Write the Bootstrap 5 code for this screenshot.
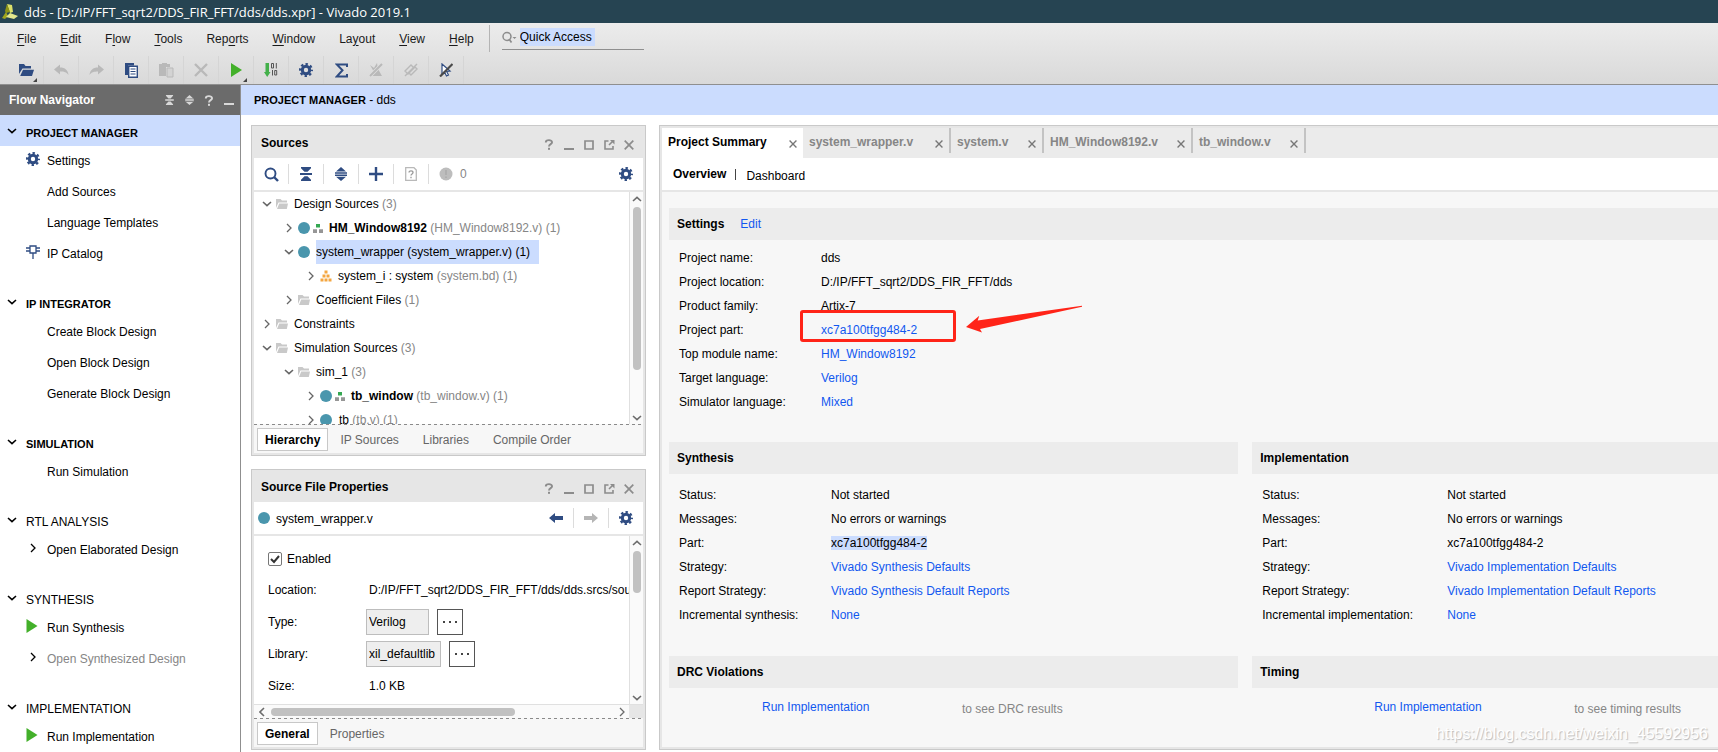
<!DOCTYPE html>
<html lang="en">
<head>
<meta charset="utf-8">
<meta name="viewport" content="width=device-width, initial-scale=1">
<title>dds - Vivado 2019.1</title>
<link href="https://cdn.jsdelivr.net/npm/bootstrap@5.3.0/dist/css/bootstrap.min.css" rel="stylesheet">
<style>
:root { --navy:#2f4c82; --sel:#cbdcfe; --line:#c9c9c9; --frame:#e6e6e6; --blue:#1158f0; --dim:#868686; }
body { font-family:"Liberation Sans",Arial,sans-serif; font-size:12px; line-height:16px; color:#000; background:#fff; }
a { color:inherit; text-decoration:none; }
a.lnk { color:var(--blue); }
svg { display:block; flex:none; }
.ib { border:0; background:none; padding:0; color:inherit; display:flex; align-items:center; justify-content:center; flex:none; }
.dim { color:var(--dim); }
.titlebar { background:#264452; color:#fff; height:23px; font:13px/22px "Open Sans","Noto Sans",sans-serif; padding-left:2px; gap:6px; }
.topbars { background:linear-gradient(#ececec,#d9d9d9); border-bottom:1px solid #8f8f8f; height:62px; }
.menus { height:31px; padding-left:17px; }
.menus nav { gap:24px; }
.menus a { text-underline-offset:2px; color:#1a1a1a; }
.menusep { width:1px; height:27px; background:#b4b4b4; margin:0 12px 0 15px; }
.quick { width:142px; height:24px; border-bottom:1px solid #8f8f8f; gap:3px; margin-top:-2px; align-items:center; }
.quick input { width:75px; height:18px; border:0; padding:0; background:var(--sel); color:#000; outline:0; }
.tools { height:31px; padding:2px 0 0 9px; }
.tools .ib { width:35px; height:28px; border-right:1px solid #d5d5d5; position:relative; color:var(--navy); }
.tools .ib:disabled { color:#b9b9b9; }
.tools .more::after { content:""; position:absolute; right:6px; bottom:2px; border:solid transparent; border-width:2px; border-right-color:#444; border-bottom-color:#444; }
.flow { width:241px; border-right:1px solid #8f8f8f; }
.flow-head { background:#6b6b6b; color:#fff; height:30px; padding:0 1px 0 9px; font-weight:700; }
.flow-head .ib { width:20px; color:#d8d8d8; }
.grp { margin-bottom:18px; }
.grp h2 { font-size:12px; line-height:16px; height:31px; margin:0; padding:4px 0 0 7px; display:flex; gap:9px; align-items:center; }
.grp h2.strong { font-size:11px; font-weight:700; }
.grp h2.plain { font-weight:400; }
.grp h2 svg { margin-top:-3px; }
.grp ul { display:flex; flex-direction:column; gap:2px; }
.grp li { height:29px; display:flex; align-items:center; padding-left:26px; }
.grp li .slot { width:21px; display:block; flex:none; margin-top:-4px; }
.pm { background:var(--sel); height:30px; padding-left:13px; line-height:30px; }
.pm b { font-size:11px; }
.desk { padding:10px 0 2px 10px; gap:13px; }
.side { width:395px; gap:13px; }
.frame { border:1px solid var(--line); padding:2px; background:var(--frame); min-height:0; display:flex; flex-direction:column; }
.f-src { flex:332 1 0; } .f-prop { flex:280 1 0; }
.phead { height:30px; padding:0 4px 1px 7px; font-weight:700; flex:none; }
.phead .ib { width:20px; color:#8c8c8c; margin-top:4px; }
.ptool { background:#fff; height:32px; margin-bottom:2px; flex:none; color:var(--navy); }
.ptool .ib { width:34px; height:20px; }
.ptool .ib + .ib { border-left:1px solid #dcdcdc; width:35px; }
.ptool .name { color:#000; padding-top:1px; margin-left:6px; }
.ptool .count { margin-left:-3px; }
.pbody { background:#fff; flex:1 1 0; min-height:0; display:flex; overflow:hidden; }
.vbar { width:14px; border-left:1px solid #e0e0e0; background:#fafafa; display:flex; flex-direction:column; align-items:center; padding:2px 0 3px; gap:2px; flex:none; color:#6c6c6c; }
.vbar i { width:8px; border-radius:4px; background:#c1c1c1; display:block; }
.vbar .rest { flex:1; width:8px; padding-top:1px; }
.vbar .rest i { height:100%; }
.trow { height:24px; display:flex; align-items:center; white-space:nowrap; padding-left:8px; }
.trow .ib { width:10px; margin-right:4px; color:#666; }
.trow .ic { margin-right:6px; }
.trow .dotc { margin-right:3px; }
.l1 { padding-left:30px; } .l2 { padding-left:52px; }
.dotc { width:12px; height:12px; border-radius:50%; background:#4a96ad; flex:none; display:block; }
.picked { background:var(--sel); line-height:24px; padding-right:9px; margin-left:3px; }
.dash { height:1px; background:repeating-linear-gradient(90deg,#8a8a8a 0 3px,transparent 3px 6px) #f7f7f7; flex:none; }
.ptabs { background:#f7f7f7; height:28px; padding:3px; flex:none; }
.ptabs button { border:1px solid transparent; background:none; padding:0 11px; height:23px; line-height:20px; color:#666; }
.ptabs button.on { border-color:#c8c8c8; background:#fff; color:#000; font-weight:700; padding:0 7px; }
.form { padding:9px 0 0 14px; overflow:hidden; white-space:nowrap; }
.form .fr { height:32px; display:flex; align-items:center; }
.form .fr.first { height:29px; padding-bottom:2px; }
.form .fl { width:98px; flex:none; }
.form .fv { padding-left:3px; }
.form input[type=text] { height:26px; border:1px solid #bdbdbd; background:#eee; padding:0 2px; color:#000; }
.dots { width:26px; height:26px; border:1px solid #555; background:#fff; margin-left:8px; }
.form input[type=checkbox] { appearance:none; width:14px; height:14px; margin:0 5px 0 0; border:1px solid #777; border-radius:2px; background:#fff url("data:image/svg+xml,%3Csvg xmlns='http://www.w3.org/2000/svg' viewBox='0 0 12 12'%3E%3Cpath d='M2 6l3 3 5-6' fill='none' stroke='%23333' stroke-width='2'/%3E%3C/svg%3E") center/12px; }
.hbar { height:14px; background:#fafafa; border-top:1px solid #e0e0e0; color:#6c6c6c; flex:none; padding-left:5px; }
.hbar .trk { flex:1; margin:0 4px 0 6px; } .hbar .trk i { display:block; height:8px; width:71%; border-radius:4px; background:#c1c1c1; }
.hbar .corner { width:14px; height:13px; background:var(--frame); margin-left:4px; }
.doc { padding-right:0; border-right:0; flex:1 1 0; min-width:0; }
.dtabs { background:#ebebeb; height:30px; flex:none; }
.dtabs .tb { display:flex; height:25px; padding:3px 6px 0 6px; border-right:2px solid #c3c3c3; color:var(--dim); font-weight:700; align-items:center; }
.dtabs .tb.on { background:#fff; color:#000; height:30px; border:0; width:141px; padding-bottom:5px; }
.dtabs .ib { margin:4px 0 0 auto; color:#777; }
.t2 { width:148px; } .t3 { width:93px; } .t4 { width:149px; } .t5 { width:113px; }
.sub { background:#fff; height:32px; margin-bottom:2px; padding-left:11px; flex:none; }
.sub a { margin-right:9px; }
.sub .bar { width:1px; height:11px; background:#444; margin-right:10px; }
.sheet { background:#f7f7f7; flex:1 1 0; min-height:0; overflow:hidden; padding:16px 0 0 7px; }
.sh { background:#ececec; height:32px; line-height:32px; font-size:12px; font-weight:700; padding-left:8px; margin:0; }
.kv { display:grid; grid-template-columns:var(--k) 1fr; margin:0; padding:6px 0 0 10px; line-height:24px; white-space:nowrap; }
.kv dt, .kv dd { font-weight:400; margin:0; }
.set { --k:142px; height:202px; }
.two { display:grid; grid-template-columns:minmax(0,55fr) minmax(0,45fr); column-gap:14px; }
.two .kv { height:182px; padding-top:9px; }
.syn { --k:152px; } .imp { --k:185px; }
.run { padding:11px 0 0 93px; white-space:nowrap; }
.run.wide { padding-left:122px; }
.run a { width:200px; flex:none; }
.run span { padding-top:2px; }
.note { position:relative; }
.mark-box { position:absolute; left:-21px; top:-8px; width:156px; height:32px; border:3px solid #ff2418; border-radius:3px; pointer-events:none; }
.mark-arrow { position:absolute; left:144px; top:-13px; }
.wm { position:absolute; right:10px; bottom:5px; font-size:16px; line-height:20px; color:#fff; text-shadow:1px 1px 1px #bbb; }
</style>
</head>
<body>
<svg width="0" height="0" class="position-absolute" aria-hidden="true">
<symbol id="gear" viewBox="0 0 14 14"><circle cx="7" cy="7" r="3.7" fill="none" stroke="currentColor" stroke-width="3"/><circle cx="7" cy="7" r="5.9" fill="none" stroke="currentColor" stroke-width="2.2" stroke-dasharray="2.4 2.234" stroke-dashoffset="1.2"/></symbol>
<symbol id="down" viewBox="0 0 10 6"><path d="M1 1l4 3.6L9 1" fill="none" stroke="currentColor" stroke-width="1.6"/></symbol>
<symbol id="up" viewBox="0 0 10 6"><path d="M1 5l4-3.6L9 5" fill="none" stroke="currentColor" stroke-width="1.6"/></symbol>
<symbol id="right" viewBox="0 0 6 10"><path d="M1 1l4 4-4 4" fill="none" stroke="currentColor" stroke-width="1.3"/></symbol>
<symbol id="left" viewBox="0 0 6 10"><path d="M5 1L1 5l4 4" fill="none" stroke="currentColor" stroke-width="1.6"/></symbol>
<symbol id="collapse" viewBox="0 0 12 14"><path d="M1 0h10v1.2L7.5 4.8h-3L1 1.2zM0 6h12v2H0zM4.500 9.200h3L11 12.800V14H1v-1.200z" fill="currentColor"/></symbol>
<symbol id="expand" viewBox="0 0 12 14"><path d="M6 0l5 4.500H1zM0 5.300h12v1.400H0zM0 7.500h12v1.400H0zM1 9.700h10L6 14z" fill="currentColor"/></symbol>
<symbol id="help" viewBox="0 0 10 12"><path d="M1.500 3.800C1.500.4 8.500.4 8.300 3.700 8.200 5.800 5 5.500 5 8.300" fill="none" stroke="currentColor" stroke-width="2.100"/><path d="M3.900 9.600h2.200v2.200H3.900z" fill="currentColor"/></symbol>
<symbol id="mini" viewBox="0 0 10 12"><path d="M0 9h10v2H0z" fill="currentColor"/></symbol>
<symbol id="maxi" viewBox="0 0 10 12"><path d="M1 2h8v8H1z" fill="none" stroke="currentColor" stroke-width="1.700"/></symbol>
<symbol id="pop" viewBox="0 0 11 12"><path d="M4.500 2H1v8h8V7M5 6l4-4" fill="none" stroke="currentColor" stroke-width="1.600"/><path d="M6 1h4.500v4.500z" fill="currentColor"/></symbol>
<symbol id="close" viewBox="0 0 10 10"><path d="M.7.700l8.600 8.600M9.300.7L.7 9.300" fill="none" stroke="currentColor" stroke-width="1.700"/></symbol>
<symbol id="folder" viewBox="0 0 12 12"><path d="M0 1h4.500L6 2.500h5V4.500H2.500L0 10z" fill="#c9c9c9"/><path d="M3.200 5.500H12L10.800 11H1z" fill="#c9c9c9"/></symbol>
<symbol id="hier" viewBox="0 0 10 9"><path d="M3 0h4v3.500H3z" fill="#35a852"/><path d="M0 5.300h4V9H0zM6 5.300h4V9H6z" fill="#969696"/></symbol>
<symbol id="bd" viewBox="0 0 12 12"><path d="M4.500.5h3v3h-3zM2.500 4.500h3v3h-3zM6.500 4.500h3v3h-3zM.5 8.500h3v3h-3zM4.500 8.500h3v3h-3zM8.500 8.500h3v3h-3z" fill="#f4a640"/></symbol>
<symbol id="play" viewBox="0 0 11 14"><path d="M0 0l11 7-11 7z" fill="#43b02a"/></symbol>
<symbol id="arr" viewBox="0 0 14 12"><path d="M14 6L8 1v3H0v4h8v3z" fill="currentColor"/></symbol>
</svg>

<div class="vh-100 d-flex flex-column overflow-hidden">
<header>
  <div class="titlebar d-flex align-items-center">
    <svg width="16" height="17" viewBox="0 0 16 17"><path d="M5 1l5 1 1 7-3 1z" fill="#dbe06a"/><path d="M5 1L3 8l1 2 4-1z" fill="#8e9416"/><path d="M0 15l4-6 2 4-3 3z" fill="#a0a51c"/><path d="M4 14l4-4 8 3-4 3z" fill="#e3e78d"/></svg>
    <span>dds - [D:/IP/FFT_sqrt2/DDS_FIR_FFT/dds/dds.xpr] - Vivado 2019.1</span>
  </div>
  <div class="topbars">
    <div class="menus d-flex align-items-center">
      <nav class="d-flex">
        <a href="#"><u>F</u>ile</a><a href="#"><u>E</u>dit</a><a href="#">F<u>l</u>ow</a><a href="#"><u>T</u>ools</a><a href="#">Rep<u>o</u>rts</a><a href="#"><u>W</u>indow</a><a href="#">La<u>y</u>out</a><a href="#"><u>V</u>iew</a><a href="#"><u>H</u>elp</a>
      </nav>
      <span class="menusep"></span>
      <label class="quick d-flex"><svg width="15" height="13" viewBox="0 0 15 13"><circle cx="5" cy="5.500" r="4" fill="none" stroke="#8d8d8d" stroke-width="1.500"/><path d="M7 8l2.500 3.500" stroke="#8d8d8d" stroke-width="1.700"/><path d="M10.500 6h4L12.500 8z" fill="#8d8d8d"/></svg><input type="text" value="Quick Access" aria-label="Quick Access"></label>
    </div>
    <div class="tools d-flex">
      <button class="ib more" aria-label="Open"><svg width="16" height="14" viewBox="0 0 16 14"><path d="M1 1h5l1.500 2H13v2.500H4.500L1 11z" fill="currentColor"/><path d="M5 6.700h11L14 13H2.200z" fill="currentColor"/></svg></button>
      <button class="ib" disabled aria-label="Undo"><svg width="15" height="12" viewBox="0 0 15 12"><path d="M0 5.500L6 .5v3c5 0 8 2.500 8.500 7.500C12.500 8 10 7.500 6 7.500v3z" fill="currentColor"/></svg></button>
      <button class="ib" disabled aria-label="Redo"><svg width="15" height="12" viewBox="0 0 15 12"><path d="M15 5.500L9 .5v3C4 3.500 1 6 .5 11 2.500 8 5 7.500 9 7.500v3z" fill="currentColor"/></svg></button>
      <button class="ib" aria-label="Copy"><svg width="13" height="15" viewBox="0 0 13 15"><path d="M0 0h9v2.500H3V12H0z" fill="currentColor"/><path d="M3.700 3.200h8.600v11H3.700z" fill="#fff" stroke="currentColor" stroke-width="1.400"/><path d="M5.500 6h5M5.500 8.500h5M5.500 11h5" stroke="currentColor" stroke-width="1.200"/></svg></button>
      <button class="ib" disabled aria-label="Paste"><svg width="15" height="15" viewBox="0 0 15 15"><path d="M0 1h3V0h5v1h3v3H7v9H0z" fill="currentColor"/><path d="M8 5h6v9H8z" fill="#d3d3d3" stroke="currentColor"/></svg></button>
      <button class="ib" disabled aria-label="Delete"><svg width="14" height="14" viewBox="0 0 14 14"><path d="M1 1l12 12M13 1L1 13" stroke="currentColor" stroke-width="2.400"/></svg></button>
      <button class="ib more" aria-label="Run"><svg width="11" height="14"><use href="#play"/></svg></button>
      <button class="ib" aria-label="Generate Bitstream"><svg width="14" height="14" viewBox="0 0 14 14"><path d="M1.500 0H5v9h1.500L3.200 14 0 9h1.500z" fill="#43b04a"/><path d="M7.500.5h2v4.500h-2zM12.300 0v5.500M8.500 7v5.500M10.700 7.500h2v4.500h-2z" fill="none" stroke="#555" stroke-width="1"/></svg></button>
      <button class="ib" aria-label="Settings"><svg width="14" height="14"><use href="#gear"/></svg></button>
      <button class="ib" aria-label="Report"><svg width="13" height="15" viewBox="0 0 13 15"><path d="M12 4V1.500H1.800L7.500 7.300 1.800 13.500H12V11" fill="none" stroke="currentColor" stroke-width="2"/></svg></button>
      <button class="ib" disabled aria-label="Unmark"><svg width="14" height="14" viewBox="0 0 14 14"><path d="M1 2l4 3 3-5 1 6 4 7H1l4-4z" fill="currentColor"/><path d="M1 13L13 1" stroke="#dedede" stroke-width="3.500"/><path d="M1 13L13 1" stroke="currentColor" stroke-width="2"/></svg></button>
      <button class="ib" disabled aria-label="Unlink"><svg width="14" height="14" viewBox="0 0 14 14"><path d="M1 8l6-6 3 3-6 6zM5 10l6-6 2 2-6 6z" fill="none" stroke="currentColor" stroke-width="1.400"/><path d="M1 13L13 1" stroke="currentColor" stroke-width="1.500"/></svg></button>
      <button class="ib" aria-label="Unselect"><svg width="14" height="14" viewBox="0 0 14 14"><path d="M3 1l8 7-3.500.3L9.500 12l-2 1-2-4L3 11.500z" fill="#fff" stroke="currentColor" stroke-width="1.200"/><path d="M1 13.500L13.500 1" stroke="#4a4a4a" stroke-width="2.200"/></svg></button>
    </div>
  </div>
</header>

<div class="d-flex flex-grow-1" style="min-height:0">
<aside class="flow flex-shrink-0 overflow-hidden">
  <div class="flow-head d-flex align-items-center"><span class="me-auto">Flow Navigator</span>
    <button class="ib" aria-label="Collapse all"><svg width="9" height="10"><use href="#collapse"/></svg></button><button class="ib" aria-label="Expand all"><svg width="9" height="10"><use href="#expand"/></svg></button><button class="ib" aria-label="Help"><svg width="10" height="11"><use href="#help"/></svg></button><button class="ib" aria-label="Minimize"><svg width="10" height="12"><use href="#mini"/></svg></button>
  </div>
  <section class="grp"><h2 class="strong" style="background:var(--sel)"><svg width="10" height="6"><use href="#down"/></svg>PROJECT MANAGER</h2>
    <ul class="list-unstyled m-0"><li><span class="slot"><svg width="14" height="14" color="#2f4c82"><use href="#gear"/></svg></span><a href="#">Settings</a></li><li><span class="slot"></span><a href="#">Add Sources</a></li><li><span class="slot"></span><a href="#">Language Templates</a></li>
    <li><span class="slot"><svg width="14" height="14" viewBox="0 0 14 14"><path d="M4 1h6v7H4zM0 3h4M0 6h4M10 3h4M10 6h4M7 8v6" fill="none" stroke="#2f4c82" stroke-width="1.300"/></svg></span><a href="#">IP Catalog</a></li></ul></section>
  <section class="grp"><h2 class="strong"><svg width="10" height="6"><use href="#down"/></svg>IP INTEGRATOR</h2>
    <ul class="list-unstyled m-0"><li><span class="slot"></span><a href="#">Create Block Design</a></li><li><span class="slot"></span><a href="#">Open Block Design</a></li><li><span class="slot"></span><a href="#">Generate Block Design</a></li></ul></section>
  <section class="grp"><h2 class="strong"><svg width="10" height="6"><use href="#down"/></svg>SIMULATION</h2>
    <ul class="list-unstyled m-0"><li><span class="slot"></span><a href="#">Run Simulation</a></li></ul></section>
  <section class="grp"><h2 class="plain"><svg width="10" height="6"><use href="#down"/></svg>RTL ANALYSIS</h2>
    <ul class="list-unstyled m-0"><li><span class="slot ps-1"><svg width="6" height="10"><use href="#right"/></svg></span><a href="#">Open Elaborated Design</a></li></ul></section>
  <section class="grp"><h2 class="plain"><svg width="10" height="6"><use href="#down"/></svg>SYNTHESIS</h2>
    <ul class="list-unstyled m-0"><li><span class="slot"><svg width="12" height="14"><use href="#play"/></svg></span><a href="#">Run Synthesis</a></li><li><span class="slot ps-1"><svg width="6" height="10"><use href="#right"/></svg></span><a href="#" class="dim">Open Synthesized Design</a></li></ul></section>
  <section class="grp mb-0"><h2 class="plain"><svg width="10" height="6"><use href="#down"/></svg>IMPLEMENTATION</h2>
    <ul class="list-unstyled m-0"><li><span class="slot"><svg width="12" height="14"><use href="#play"/></svg></span><a href="#">Run Implementation</a></li></ul></section>
</aside>

<main class="d-flex flex-column flex-grow-1" style="min-width:0">
  <div class="pm flex-shrink-0"><b>PROJECT MANAGER</b> - dds</div>
  <div class="desk d-flex flex-grow-1" style="min-height:0">
    <div class="side d-flex flex-column flex-shrink-0">
      <section class="frame f-src">
        <div class="phead d-flex align-items-center"><span class="me-auto">Sources</span><button class="ib" aria-label="Help"><svg width="10" height="11"><use href="#help"/></svg></button><button class="ib" aria-label="Minimize"><svg width="10" height="12"><use href="#mini"/></svg></button><button class="ib" aria-label="Maximize"><svg width="10" height="12"><use href="#maxi"/></svg></button><button class="ib" aria-label="Float"><svg width="11" height="12"><use href="#pop"/></svg></button><button class="ib" aria-label="Close"><svg width="10" height="10"><use href="#close"/></svg></button></div>
        <div class="ptool d-flex align-items-center">
          <button class="ib" aria-label="Search"><svg width="15" height="15" viewBox="0 0 15 15"><circle cx="6.500" cy="6.500" r="5" fill="none" stroke="currentColor" stroke-width="1.900"/><path d="M10 10l4 4" stroke="currentColor" stroke-width="2.400"/></svg></button><button class="ib" aria-label="Collapse all"><svg width="12" height="14"><use href="#collapse"/></svg></button><button class="ib" aria-label="Expand all"><svg width="12" height="14"><use href="#expand"/></svg></button><button class="ib" aria-label="Add"><svg width="14" height="14" viewBox="0 0 14 14"><path d="M7 0v14M0 7h14" stroke="currentColor" stroke-width="2.400"/></svg></button><button class="ib" disabled aria-label="File help"><svg width="12" height="14" viewBox="0 0 12 14"><path d="M.7.700H9l2.300 2.300v10.300H.7z" fill="none" stroke="#b9b9b9" stroke-width="1.300"/><path d="M4 5.500c0-2.200 4-2.200 4 0C8 7 6 7 6 8.600M6 9.700v1.500" fill="none" stroke="#999" stroke-width="1.300"/></svg></button><button class="ib" aria-label="Messages"><svg width="14" height="14" viewBox="0 0 14 14"><circle cx="7" cy="7" r="6.500" fill="#bdbdbd"/><path d="M7 3v5M7 9.500V11" stroke="#aaa" stroke-width="1.500"/></svg></button><span class="dim count">0</span>
          <button class="ib ms-auto border-0" aria-label="Settings"><svg width="14" height="14"><use href="#gear"/></svg></button>
        </div>
        <div class="pbody">
          <div class="flex-grow-1 overflow-hidden">
            <div class="trow"><button class="ib" aria-label="Toggle"><svg width="10" height="6"><use href="#down"/></svg></button><svg class="ic" width="12" height="12"><use href="#folder"/></svg><span>Design Sources <span class="dim">(3)</span></span></div>
            <div class="trow l1"><button class="ib" aria-label="Toggle"><svg width="6" height="10"><use href="#right"/></svg></button><i class="dotc"></i><svg class="ic" width="10" height="9"><use href="#hier"/></svg><span><b>HM_Window8192</b> <span class="dim">(HM_Window8192.v) (1)</span></span></div>
            <div class="trow l1"><button class="ib" aria-label="Toggle"><svg width="10" height="6"><use href="#down"/></svg></button><i class="dotc"></i><span class="picked">system_wrapper (system_wrapper.v) (1)</span></div>
            <div class="trow l2"><button class="ib" aria-label="Toggle"><svg width="6" height="10"><use href="#right"/></svg></button><svg class="ic" width="12" height="12"><use href="#bd"/></svg><span>system_i : system <span class="dim">(system.bd) (1)</span></span></div>
            <div class="trow l1"><button class="ib" aria-label="Toggle"><svg width="6" height="10"><use href="#right"/></svg></button><svg class="ic" width="12" height="12"><use href="#folder"/></svg><span>Coefficient Files <span class="dim">(1)</span></span></div>
            <div class="trow"><button class="ib" aria-label="Toggle"><svg width="6" height="10"><use href="#right"/></svg></button><svg class="ic" width="12" height="12"><use href="#folder"/></svg><span>Constraints</span></div>
            <div class="trow"><button class="ib" aria-label="Toggle"><svg width="10" height="6"><use href="#down"/></svg></button><svg class="ic" width="12" height="12"><use href="#folder"/></svg><span>Simulation Sources <span class="dim">(3)</span></span></div>
            <div class="trow l1"><button class="ib" aria-label="Toggle"><svg width="10" height="6"><use href="#down"/></svg></button><svg class="ic" width="12" height="12"><use href="#folder"/></svg><span>sim_1 <span class="dim">(3)</span></span></div>
            <div class="trow l2"><button class="ib" aria-label="Toggle"><svg width="6" height="10"><use href="#right"/></svg></button><i class="dotc"></i><svg class="ic" width="10" height="9"><use href="#hier"/></svg><span><b>tb_window</b> <span class="dim">(tb_window.v) (1)</span></span></div>
            <div class="trow l2"><button class="ib" aria-label="Toggle"><svg width="6" height="10"><use href="#right"/></svg></button><i class="dotc"></i><span class="ms-1">tb <span class="dim">(tb.v) (1)</span></span></div>
          </div>
          <div class="vbar"><svg width="10" height="10" viewBox="0 -2 10 10"><use href="#up" width="10" height="6"/></svg><div class="rest"><i style="height:79%"></i></div><svg width="10" height="6"><use href="#down"/></svg></div>
        </div>
        <div class="dash"></div>
        <div class="ptabs d-flex"><button class="on">Hierarchy</button><button>IP Sources</button><button>Libraries</button><button>Compile Order</button></div>
      </section>

      <section class="frame f-prop">
        <div class="phead d-flex align-items-center"><span class="me-auto">Source File Properties</span><button class="ib" aria-label="Help"><svg width="10" height="11"><use href="#help"/></svg></button><button class="ib" aria-label="Minimize"><svg width="10" height="12"><use href="#mini"/></svg></button><button class="ib" aria-label="Maximize"><svg width="10" height="12"><use href="#maxi"/></svg></button><button class="ib" aria-label="Float"><svg width="11" height="12"><use href="#pop"/></svg></button><button class="ib" aria-label="Close"><svg width="10" height="10"><use href="#close"/></svg></button></div>
        <div class="ptool d-flex align-items-center"><i class="dotc ms-1"></i><span class="me-auto name">system_wrapper.v</span><button class="ib" aria-label="Back"><svg width="14" height="12" viewBox="0 0 14 12"><path d="M0 6l6-5v3h8v4H6v3z" fill="currentColor"/></svg></button><button class="ib" disabled aria-label="Forward"><svg width="14" height="12" color="#b5b5b5"><use href="#arr"/></svg></button><button class="ib" aria-label="Settings"><svg width="14" height="14"><use href="#gear"/></svg></button></div>
        <div class="pbody">
          <div class="form flex-grow-1">
            <div class="fr first"><input type="checkbox" id="en" checked><label for="en">Enabled</label></div>
            <div class="fr"><span class="fl">Location:</span><span class="fv">D:/IP/FFT_sqrt2/DDS_FIR_FFT/dds/dds.srcs/sources_1/bd</span></div>
            <div class="fr"><label class="fl" for="ty">Type:</label><input type="text" id="ty" value="Verilog" readonly style="width:63px"><button class="dots ib" aria-label="Choose type"><svg width="14" height="2" viewBox="0 0 14 2"><path d="M0 0h2v2H0zM6 0h2v2H6zM12 0h2v2h-2z" fill="#444"/></svg></button></div>
            <div class="fr"><label class="fl" for="lb">Library:</label><input type="text" id="lb" value="xil_defaultlib" readonly style="width:75px"><button class="dots ib" aria-label="Choose library"><svg width="14" height="2" viewBox="0 0 14 2"><path d="M0 0h2v2H0zM6 0h2v2H6zM12 0h2v2h-2z" fill="#444"/></svg></button></div>
            <div class="fr"><span class="fl">Size:</span><span class="fv">1.0 KB</span></div>
          </div>
          <div class="vbar"><svg width="10" height="10" viewBox="0 -2 10 10"><use href="#up" width="10" height="6"/></svg><div class="rest"><i style="height:29%"></i></div><svg width="10" height="6"><use href="#down"/></svg></div>
        </div>
        <div class="hbar d-flex align-items-center"><svg width="6" height="10"><use href="#left"/></svg><div class="trk"><i></i></div><svg width="6" height="10"><use href="#right"/></svg><span class="corner"></span></div>
        <div class="dash"></div>
        <div class="ptabs d-flex"><button class="on">General</button><button>Properties</button></div>
      </section>
    </div>

    <section class="frame doc position-relative">
      <div class="dtabs d-flex">
        <div class="tb on">Project Summary<button class="ib" aria-label="Close tab"><svg width="8" height="8"><use href="#close"/></svg></button></div>
        <div class="tb t2">system_wrapper.v<button class="ib" aria-label="Close tab"><svg width="8" height="8"><use href="#close"/></svg></button></div>
        <div class="tb t3">system.v<button class="ib" aria-label="Close tab"><svg width="8" height="8"><use href="#close"/></svg></button></div>
        <div class="tb t4">HM_Window8192.v<button class="ib" aria-label="Close tab"><svg width="8" height="8"><use href="#close"/></svg></button></div>
        <div class="tb t5">tb_window.v<button class="ib" aria-label="Close tab"><svg width="8" height="8"><use href="#close"/></svg></button></div>
      </div>
      <div class="sub d-flex align-items-center"><a href="#" class="fw-bold">Overview</a><span class="bar"></span><a href="#" class="pt-1">Dashboard</a></div>
      <div class="sheet">
        <h3 class="sh">Settings<a href="#" class="lnk fw-normal ms-3">Edit</a></h3>
        <dl class="kv set align-content-start">
          <dt>Project name:</dt><dd>dds</dd>
          <dt>Project location:</dt><dd>D:/IP/FFT_sqrt2/DDS_FIR_FFT/dds</dd>
          <dt>Product family:</dt><dd>Artix-7</dd>
          <dt>Project part:</dt><dd class="note"><a href="#" class="lnk">xc7a100tfgg484-2</a><span class="mark-box"></span><svg class="mark-arrow" width="118" height="28" viewBox="0 0 118 28"><path d="M1 22L14.300 10.700 12.700 15.500 117 .8v1L15 24l2 3.500z" fill="#ff2418"/></svg></dd>
          <dt>Top module name:</dt><dd><a href="#" class="lnk">HM_Window8192</a></dd>
          <dt>Target language:</dt><dd><a href="#" class="lnk">Verilog</a></dd>
          <dt>Simulator language:</dt><dd><a href="#" class="lnk">Mixed</a></dd>
        </dl>
        <div class="two">
          <section><h3 class="sh">Synthesis</h3>
            <dl class="kv syn align-content-start"><dt>Status:</dt><dd>Not started</dd><dt>Messages:</dt><dd>No errors or warnings</dd><dt>Part:</dt><dd><span style="background:var(--sel)">xc7a100tfgg484-2</span></dd><dt>Strategy:</dt><dd><a href="#" class="lnk">Vivado Synthesis Defaults</a></dd><dt>Report Strategy:</dt><dd><a href="#" class="lnk">Vivado Synthesis Default Reports</a></dd><dt>Incremental synthesis:</dt><dd><a href="#" class="lnk">None</a></dd></dl>
          </section>
          <section><h3 class="sh">Implementation</h3>
            <dl class="kv imp align-content-start"><dt>Status:</dt><dd>Not started</dd><dt>Messages:</dt><dd>No errors or warnings</dd><dt>Part:</dt><dd>xc7a100tfgg484-2</dd><dt>Strategy:</dt><dd><a href="#" class="lnk">Vivado Implementation Defaults</a></dd><dt>Report Strategy:</dt><dd><a href="#" class="lnk">Vivado Implementation Default Reports</a></dd><dt>Incremental implementation:</dt><dd><a href="#" class="lnk">None</a></dd></dl>
          </section>
          <section><h3 class="sh">DRC Violations</h3><div class="run d-flex"><a href="#" class="lnk">Run Implementation</a><span class="dim">to see DRC results</span></div></section>
          <section><h3 class="sh">Timing</h3><div class="run wide d-flex"><a href="#" class="lnk">Run Implementation</a><span class="dim">to see timing results</span></div></section>
        </div>
      </div>
      <div class="wm">https://blog.csdn.net/weixin_45592956</div>
    </section>
  </div>
</main>
</div>
</div>
<script src="https://cdn.jsdelivr.net/npm/bootstrap@5.3.0/dist/js/bootstrap.bundle.min.js"></script>
</body>
</html>
